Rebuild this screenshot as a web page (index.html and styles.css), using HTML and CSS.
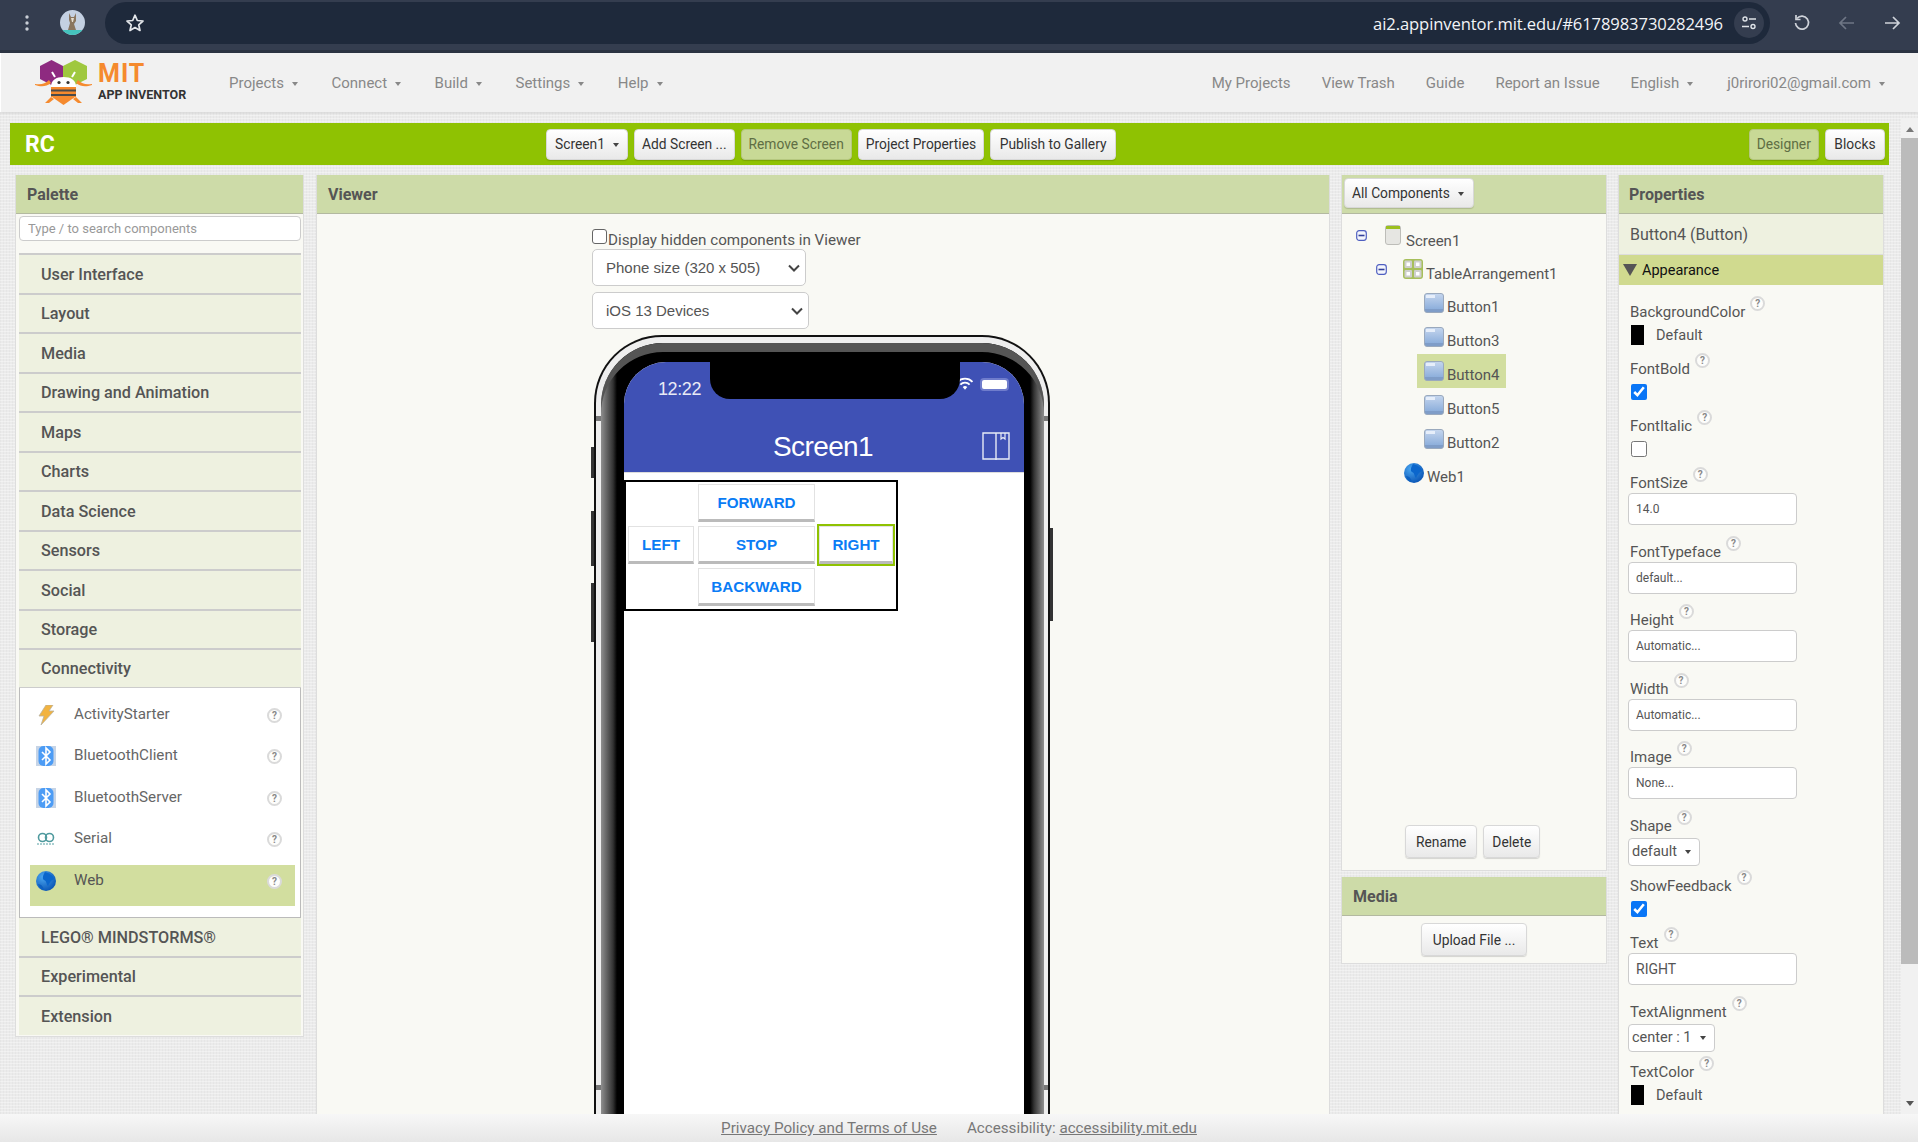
FILE: index.html
```html
<!DOCTYPE html>
<html lang="en">
<head>
    <meta charset="UTF-8">
    <title>MIT App Inventor</title>
    <link rel="stylesheet" href="styles.css">
</head>
<body>
    <svg class="defs" width="0" height="0">
        <defs>
            <radialGradient id="globe-fill" cx="35%" cy="30%" r="75%">
                <stop offset="0" stop-color="#4aa6f0"/>
                <stop offset="1" stop-color="#0a55b5"/>
            </radialGradient>
            <linearGradient id="btn-fill" x1="0" y1="0" x2="0" y2="1">
                <stop offset="0" stop-color="#c5d6ee"/>
                <stop offset="0.8" stop-color="#8fb0dc"/>
                <stop offset="0.8" stop-color="#7f9dc8"/>
                <stop offset="1" stop-color="#7f9dc8"/>
            </linearGradient>
            <symbol id="i-globe" viewBox="0 0 20 20">
                <circle cx="10" cy="10" r="10" fill="url(#globe-fill)"/>
                <path d="M9 1 C13 2 17 4 18 8 C15 9 14 11 12 15 C10 13 11 10 8 9 C6 8 7 4 9 1 Z" fill="#0b66cc"/>
                <path d="M2 13 C5 13 7 15 8 19 C5 19 3 16 2 13 Z" fill="#0d60c0"/>
            </symbol>
            <symbol id="i-button" viewBox="0 0 20 20">
                <rect x="0.5" y="0.5" width="19" height="19" rx="2.5" fill="url(#btn-fill)" stroke="#9aa9bd"/>
                <rect x="2" y="2" width="9" height="3" fill="#e6eefa"/>
            </symbol>
            <symbol id="i-minus" viewBox="0 0 11 11">
                <rect x="0.7" y="0.7" width="9.6" height="9.6" rx="2.5" fill="#f4f6fc" stroke="#4f5fc0" stroke-width="1.2"/>
                <rect x="2.5" y="4.7" width="6" height="1.6" fill="#33409a"/>
            </symbol>
            <symbol id="i-bluetooth" viewBox="0 0 20 20">
                <rect width="20" height="20" fill="#c6d4e6"/>
                <rect x="2.5" y="0" width="15" height="20" rx="5" fill="#4c9cf5"/>
                <path d="M6 6 L14 14 L10 18 V2 L14 6 L6 14" fill="none" stroke="#fff" stroke-width="1.6"/>
            </symbol>
            <symbol id="i-chevron" viewBox="0 0 12 8">
                <path d="M1 1.5 L6 6.5 L11 1.5" fill="none" stroke="#444" stroke-width="2"/>
            </symbol>
        </defs>
    </svg>

    <div class="browser-bar">
        <svg class="kebab" width="6" height="16" viewBox="0 0 6 16">
            <circle cx="3" cy="2" r="1.7" fill="#c9ced6"/>
            <circle cx="3" cy="8" r="1.7" fill="#c9ced6"/>
            <circle cx="3" cy="14" r="1.7" fill="#c9ced6"/>
        </svg>
        <svg class="avatar" width="25" height="25" viewBox="0 0 25 25">
            <clipPath id="avatar-clip"><circle cx="12.5" cy="12.5" r="12.5"/></clipPath>
            <g clip-path="url(#avatar-clip)">
                <rect width="25" height="25" fill="#c4d0e2"/>
                <rect y="20" width="25" height="5" fill="#45c3bd"/>
                <path d="M9 3 L11 7 H14 L16 3 L16 11 L14 14 L16 20 H8 L10 13 L9 10 Z" fill="#8a7660"/>
                <path d="M11 8 H14 L13 12 H12 Z" fill="#e8dfd0"/>
            </g>
        </svg>
        <div class="url-pill">
            <svg class="star" width="20" height="20" viewBox="0 0 20 20">
                <path d="M10 2.2 L12.3 7.5 L18 8 L13.7 11.8 L15 17.5 L10 14.5 L5 17.5 L6.3 11.8 L2 8 L7.7 7.5 Z" fill="none" stroke="#e3e6ea" stroke-width="1.7" stroke-linejoin="round"/>
            </svg>
            <span class="url-text">ai2.appinventor.mit.edu/#6178983730282496</span>
            <span class="tune-chip">
                <svg width="16" height="14" viewBox="0 0 16 14">
                    <circle cx="4" cy="3" r="2" fill="none" stroke="#dfe3e8" stroke-width="1.4"/>
                    <path d="M8 3 H15 M1 10.5 H8" stroke="#dfe3e8" stroke-width="1.4"/>
                    <circle cx="12" cy="10.5" r="2" fill="none" stroke="#dfe3e8" stroke-width="1.4"/>
                </svg>
            </span>
        </div>
        <svg class="tool-icon first" width="18" height="18" viewBox="0 0 18 18">
            <path d="M4 4.5 A6.5 6.5 0 1 1 2.5 9" fill="none" stroke="#cfd3da" stroke-width="1.7"/>
            <path d="M3 1 V5.5 H7.5" fill="none" stroke="#cfd3da" stroke-width="1.7"/>
        </svg>
        <svg class="tool-icon" width="18" height="18" viewBox="0 0 18 18">
            <path d="M16 9 H2 M8 3 L2 9 L8 15" fill="none" stroke="#6e7685" stroke-width="1.7"/>
        </svg>
        <svg class="tool-icon" width="18" height="18" viewBox="0 0 18 18">
            <path d="M2 9 H16 M10 3 L16 9 L10 15" fill="none" stroke="#cfd3da" stroke-width="1.7"/>
        </svg>
    </div>

    <header class="top-nav">
        <div class="brand">
            <svg class="brand-logo" width="57" height="48" viewBox="0 0 57 48">
                <path d="M16.5 1 L28 7 V20 L16.5 26 L5 20 V7 Z" fill="#8e2a80"/>
                <path d="M40 1 L52 7 V20 L40 26 L28 20 V7 Z" fill="#9fc83f"/>
                <path d="M0 25 C6 26 10 25 14 21 L16 24 C11 28 6 28 0 26 Z" fill="#f58a2e"/>
                <path d="M57 25 C51 26 47 25 43 21 L41 24 C46 28 51 28 57 26 Z" fill="#f58a2e"/>
                <path d="M16 28 C16 21 21 18 28.5 18 C36 18 41 21 41 28 Z" fill="#fff"/>
                <path d="M20 18 L17 13 M37 18 L40 13" stroke="#fff" stroke-width="2"/>
                <circle cx="24" cy="23.5" r="1.6" fill="#333"/>
                <circle cx="33" cy="23.5" r="1.6" fill="#333"/>
                <rect x="16" y="28" width="25" height="10" fill="#f58a2e"/>
                <rect x="16" y="30.5" width="25" height="2" fill="#4a4a4a"/>
                <rect x="16" y="35" width="25" height="2" fill="#4a4a4a"/>
                <path d="M17 38 H40 L28.5 46 Z" fill="#f58a2e"/>
                <path d="M16 38 L10 44 H14 L19 40 M41 38 L47 44 H43 L38 40" fill="#f58a2e"/>
            </svg>
            <div class="brand-text">
                <span class="brand-mit">MIT</span>
                <span class="brand-app">APP INVENTOR</span>
            </div>
        </div>
        <nav class="nav-left">
            <span class="nav-item">Projects<i class="caret"></i></span>
            <span class="nav-item">Connect<i class="caret"></i></span>
            <span class="nav-item">Build<i class="caret"></i></span>
            <span class="nav-item">Settings<i class="caret"></i></span>
            <span class="nav-item">Help<i class="caret"></i></span>
        </nav>
        <nav class="nav-right">
            <span class="nav-item">My Projects</span>
            <span class="nav-item">View Trash</span>
            <span class="nav-item">Guide</span>
            <span class="nav-item">Report an Issue</span>
            <span class="nav-item">English<i class="caret"></i></span>
            <span class="nav-item nav-user">j0rirori02@gmail.com<i class="caret"></i></span>
        </nav>
    </header>

    <div class="page-row">
        <main class="workspace">
            <div class="project-bar">
                <div class="project-title">RC</div>
                <div class="btn-group">
                    <button class="btn screen-btn">Screen1<i class="caret dark"></i></button>
                    <button class="btn">Add Screen ...</button>
                    <button class="btn is-muted">Remove Screen</button>
                    <button class="btn">Project Properties</button>
                    <button class="btn">Publish to Gallery</button>
                </div>
                <div class="btn-group view-switch">
                    <button class="btn is-muted">Designer</button>
                    <button class="btn">Blocks</button>
                </div>
            </div>

            <div class="columns">
                <section class="panel palette">
                    <h2 class="panel-head">Palette</h2>
                    <input class="palette-search" type="text" placeholder="Type / to search components">
                    <div class="drawer">User Interface</div>
                    <div class="drawer">Layout</div>
                    <div class="drawer">Media</div>
                    <div class="drawer">Drawing and Animation</div>
                    <div class="drawer">Maps</div>
                    <div class="drawer">Charts</div>
                    <div class="drawer">Data Science</div>
                    <div class="drawer">Sensors</div>
                    <div class="drawer">Social</div>
                    <div class="drawer">Storage</div>
                    <div class="drawer is-last">Connectivity</div>
                    <div class="drawer-open">
                        <div class="comp">
                            <svg class="comp-icon" viewBox="0 0 20 20">
                                <path d="M10 0 H17 L13 6 H18 L5 20 L8 11 H3 Z" fill="#f2b340" stroke="#b9b3a0" stroke-width="0.8"/>
                            </svg>
                            <span class="comp-name">ActivityStarter</span>
                            <span class="help">?</span>
                        </div>
                        <div class="comp">
                            <svg class="comp-icon"><use href="#i-bluetooth"/></svg>
                            <span class="comp-name">BluetoothClient</span>
                            <span class="help">?</span>
                        </div>
                        <div class="comp">
                            <svg class="comp-icon"><use href="#i-bluetooth"/></svg>
                            <span class="comp-name">BluetoothServer</span>
                            <span class="help">?</span>
                        </div>
                        <div class="comp">
                            <svg class="comp-icon" viewBox="0 0 20 20">
                                <circle cx="6.5" cy="8.5" r="4" fill="none" stroke="#4f9a9e" stroke-width="1.6"/>
                                <circle cx="13.5" cy="8.5" r="4" fill="none" stroke="#4f9a9e" stroke-width="1.6"/>
                                <path d="M1 15 H19" stroke="#8fc0c2" stroke-width="1.6" stroke-dasharray="2 1"/>
                            </svg>
                            <span class="comp-name">Serial</span>
                            <span class="help">?</span>
                        </div>
                        <div class="comp is-selected">
                            <svg class="comp-icon"><use href="#i-globe"/></svg>
                            <span class="comp-name">Web</span>
                            <span class="help">?</span>
                        </div>
                    </div>
                    <div class="drawer no-top">LEGO® MINDSTORMS®</div>
                    <div class="drawer">Experimental</div>
                    <div class="drawer">Extension</div>
                </section>

                <section class="panel viewer">
                    <h2 class="panel-head">Viewer</h2>
                    <div class="viewer-body">
                        <label class="hidden-toggle"><input type="checkbox">Display hidden components in Viewer</label>
                        <div class="select-wrap">
                            <select class="viewer-select size-select"><option>Phone size (320 x 505)</option></select>
                            <svg class="select-chevron"><use href="#i-chevron"/></svg>
                        </div>
                        <div class="select-wrap second">
                            <select class="viewer-select device-select"><option>iOS 13 Devices</option></select>
                            <svg class="select-chevron"><use href="#i-chevron"/></svg>
                        </div>

                        <div class="phone">
                            <i class="side-btn left-one"></i>
                            <i class="side-btn left-two"></i>
                            <i class="side-btn left-three"></i>
                            <i class="side-btn right-one"></i>
                            <div class="phone-silver">
                                <div class="phone-dark">
                                    <div class="phone-screen">
                                        <div class="notch"></div>
                                        <div class="status-row">
                                            <span class="status-time">12:22</span>
                                            <svg class="status-wifi" width="18" height="15" viewBox="0 0 15 13">
                                                <path d="M1 5 A9 9 0 0 1 14 5 M3.5 7.5 A5.5 5.5 0 0 1 11.5 7.5" fill="none" stroke="#fff" stroke-width="1.6"/>
                                                <path d="M5.5 9.6 A3 3 0 0 1 9.5 9.6 L7.5 12 Z" fill="#fff"/>
                                            </svg>
                                            <span class="status-battery"></span>
                                        </div>
                                        <div class="app-bar">
                                            <span class="app-title">Screen1</span>
                                            <svg class="app-book" width="28" height="28" viewBox="0 0 28 28">
                                                <path d="M1 1 H27 V27 H1 Z M14 1 V28" fill="none" stroke="#e8ebf6" stroke-width="1.4"/>
                                                <path d="M19 1 V7 L21 5.5 L23 7 V1" fill="none" stroke="#e8ebf6" stroke-width="1.2"/>
                                            </svg>
                                        </div>
                                        <div class="table-arr">
                                            <div class="table-cell cell-empty"></div>
                                            <div class="table-cell"><span class="app-btn">FORWARD</span></div>
                                            <div class="table-cell cell-empty"></div>
                                            <div class="table-cell"><span class="app-btn">LEFT</span></div>
                                            <div class="table-cell"><span class="app-btn">STOP</span></div>
                                            <div class="table-cell is-picked"><span class="app-btn">RIGHT</span></div>
                                            <div class="table-cell cell-empty"></div>
                                            <div class="table-cell"><span class="app-btn">BACKWARD</span></div>
                                            <div class="table-cell cell-empty"></div>
                                        </div>
                                    </div>
                                </div>
                            </div>
                        </div>
                    </div>
                </section>

                <div class="tree-column">
                    <section class="panel tree-panel">
                        <div class="panel-head tree-head">
                            <button class="btn all-btn">All Components<i class="caret dark"></i></button>
                        </div>
                        <div class="tree">
                            <div class="tree-row row-screen">
                                <svg class="tree-minus"><use href="#i-minus"/></svg>
                                <svg class="screen-icon" width="16" height="20" viewBox="0 0 16 20">
                                    <rect x="0.5" y="0.5" width="15" height="19" rx="2.5" fill="#e6e6e2" stroke="#bdbdb8"/>
                                    <rect x="1" y="1" width="14" height="3" fill="#9cc01e"/>
                                </svg>
                                <span>Screen1</span>
                            </div>
                            <div class="tree-row row-table">
                                <svg class="tree-minus"><use href="#i-minus"/></svg>
                                <svg class="tree-icon" viewBox="0 0 20 20">
                                    <rect width="20" height="20" rx="3" fill="#a7bf5b"/>
                                    <rect x="1.5" y="1.5" width="7.5" height="7.5" rx="1" fill="#cfcfcf"/>
                                    <rect x="11" y="1.5" width="7.5" height="7.5" rx="1" fill="#cfcfcf"/>
                                    <rect x="1.5" y="11" width="7.5" height="7.5" rx="1" fill="#cfcfcf"/>
                                    <rect x="11" y="11" width="7.5" height="7.5" rx="1" fill="#cfcfcf"/>
                                    <rect x="3.5" y="3.5" width="3.5" height="3.5" fill="#fff"/>
                                    <rect x="13" y="3.5" width="3.5" height="3.5" fill="#fff"/>
                                    <rect x="3.5" y="13" width="3.5" height="3.5" fill="#fff"/>
                                    <rect x="13" y="13" width="3.5" height="3.5" fill="#fff"/>
                                </svg>
                                <span>TableArrangement1</span>
                            </div>
                            <div class="tree-row row-child"><svg class="tree-icon"><use href="#i-button"/></svg><span>Button1</span></div>
                            <div class="tree-row row-child"><svg class="tree-icon"><use href="#i-button"/></svg><span>Button3</span></div>
                            <div class="tree-row row-child is-selected"><svg class="tree-icon"><use href="#i-button"/></svg><span>Button4</span></div>
                            <div class="tree-row row-child"><svg class="tree-icon"><use href="#i-button"/></svg><span>Button5</span></div>
                            <div class="tree-row row-child"><svg class="tree-icon"><use href="#i-button"/></svg><span>Button2</span></div>
                            <div class="tree-row row-web"><svg class="tree-icon"><use href="#i-globe"/></svg><span>Web1</span></div>
                        </div>
                        <div class="tree-actions">
                            <button class="btn">Rename</button>
                            <button class="btn">Delete</button>
                        </div>
                    </section>
                    <section class="panel media-panel">
                        <h2 class="panel-head">Media</h2>
                        <div class="media-body">
                            <button class="btn">Upload File ...</button>
                        </div>
                    </section>
                </div>

                <section class="panel properties">
                    <h2 class="panel-head">Properties</h2>
                    <div class="prop-title">Button4 (Button)</div>
                    <div class="prop-group"><i class="group-arrow"></i>Appearance</div>
                    <div class="prop-list">
                        <div class="prop prop-color">
                            <div class="prop-label">BackgroundColor<span class="help">?</span></div>
                            <div class="color-row"><i class="swatch"></i>Default</div>
                        </div>
                        <div class="prop prop-check">
                            <div class="prop-label">FontBold<span class="help">?</span></div>
                            <input class="prop-checkbox" type="checkbox" checked>
                        </div>
                        <div class="prop prop-check">
                            <div class="prop-label">FontItalic<span class="help">?</span></div>
                            <input class="prop-checkbox" type="checkbox">
                        </div>
                        <div class="prop prop-field">
                            <div class="prop-label">FontSize<span class="help">?</span></div>
                            <div class="prop-input">14.0</div>
                        </div>
                        <div class="prop prop-field">
                            <div class="prop-label">FontTypeface<span class="help">?</span></div>
                            <div class="prop-input">default...</div>
                        </div>
                        <div class="prop prop-field">
                            <div class="prop-label">Height<span class="help">?</span></div>
                            <div class="prop-input">Automatic...</div>
                        </div>
                        <div class="prop prop-field">
                            <div class="prop-label">Width<span class="help">?</span></div>
                            <div class="prop-input">Automatic...</div>
                        </div>
                        <div class="prop prop-field">
                            <div class="prop-label">Image<span class="help">?</span></div>
                            <div class="prop-input">None...</div>
                        </div>
                        <div class="prop prop-choice">
                            <div class="prop-label">Shape<span class="help">?</span></div>
                            <div class="prop-select">default<i class="caret dark"></i></div>
                        </div>
                        <div class="prop prop-check">
                            <div class="prop-label">ShowFeedback<span class="help">?</span></div>
                            <input class="prop-checkbox" type="checkbox" checked>
                        </div>
                        <div class="prop prop-field">
                            <div class="prop-label">Text<span class="help">?</span></div>
                            <div class="prop-input is-text">RIGHT</div>
                        </div>
                        <div class="prop prop-choice">
                            <div class="prop-label">TextAlignment<span class="help">?</span></div>
                            <div class="prop-select">center : 1<i class="caret dark"></i></div>
                        </div>
                        <div class="prop prop-color">
                            <div class="prop-label">TextColor<span class="help">?</span></div>
                            <div class="color-row"><i class="swatch"></i>Default</div>
                        </div>
                    </div>
                </section>
            </div>
        </main>
        <div class="scrollbar">
            <i class="scroll-up"></i>
            <div class="scroll-thumb"></div>
            <i class="scroll-down"></i>
        </div>
    </div>

    <footer class="page-footer">
        <a href="#">Privacy Policy and Terms of Use</a>
        <span>Accessibility: <a href="#">accessibility.mit.edu</a></span>
    </footer>
</body>
</html>
```

FILE: styles.css
```css
* {
    box-sizing: border-box;
}
html,
body {
    height: 100%;
}
body {
    margin: 0;
    height: 1142px;
    overflow: hidden;
    display: flex;
    flex-direction: column;
    font-family: Roboto, "Liberation Sans", sans-serif;
    color: #555;
    background-color: #ebebeb;
    background-image:
        repeating-linear-gradient(0deg, rgba(255, 255, 255, 0.35) 0 1px, transparent 1px 3px),
        repeating-linear-gradient(90deg, rgba(0, 0, 0, 0.025) 0 1px, transparent 1px 3px);
}
.defs {
    position: absolute;
}
button {
    font-family: inherit;
}

/* browser toolbar */
.browser-bar {
    height: 53px;
    flex: none;
    display: flex;
    align-items: flex-start;
    background: #343d4f;
    border-bottom: 3px solid #2b3342;
}
.kebab {
    margin: 15px 0 0 24px;
}
.avatar {
    margin: 10px 0 0 30px;
}
.url-pill {
    width: 1665px;
    height: 42px;
    margin: 2px 0 0 20px;
    padding: 0 6px 0 20px;
    display: flex;
    align-items: center;
    background: #1e293b;
    border-radius: 21px;
}
.url-text {
    margin-left: auto;
    color: #f2f4f7;
    font-family: "Open Sans", sans-serif;
    font-size: 16.6px;
    letter-spacing: -0.1px;
}
.tune-chip {
    width: 30px;
    height: 30px;
    margin-left: 11px;
    display: flex;
    align-items: center;
    justify-content: center;
    background: #343d4f;
    border-radius: 50%;
}
.tool-icon {
    margin: 14px 0 0 27px;
}
.tool-icon.first {
    margin-left: 23px;
}

/* app header */
.top-nav {
    height: 59px;
    flex: none;
    display: flex;
    align-items: center;
    padding-right: 33px;
    background: #f1f1f1;
    border-left: 1px solid #fff;
    box-shadow: 0 1px 2px rgba(0, 0, 0, 0.12);
}
.brand {
    width: 228px;
    padding-left: 34px;
    display: flex;
    align-items: center;
}
.brand-text {
    margin-left: 6px;
    padding-bottom: 4px;
    display: flex;
    flex-direction: column;
}
.brand-mit {
    color: #f58a2e;
    font-size: 25px;
    font-weight: 700;
    letter-spacing: 1px;
    line-height: 29px;
}
.brand-app {
    color: #333;
    font-size: 12.5px;
    font-weight: 700;
    line-height: 14px;
}
.nav-left {
    display: flex;
    gap: 33.5px;
}
.nav-right {
    margin-left: auto;
    display: flex;
    gap: 31px;
}
.nav-item {
    padding-top: 1px;
    color: #888;
    font-size: 15px;
    white-space: nowrap;
}
.nav-user {
    margin-left: 3px;
}
.caret {
    display: inline-block;
    margin-left: 8px;
    vertical-align: middle;
    border-top: 4px solid #888;
    border-left: 3px solid transparent;
    border-right: 3px solid transparent;
}
.caret.dark {
    border-top-color: #444;
}

/* page body */
.page-row {
    flex: 1;
    min-height: 0;
    display: flex;
}
.workspace {
    width: 1901px;
    padding: 11px 12px 0 10px;
    overflow: hidden;
    display: flex;
    flex-direction: column;
}
.scrollbar {
    width: 17px;
    margin-top: 6px;
    display: flex;
    flex-direction: column;
    align-items: center;
    background: #f1f1f1;
}
.scroll-up {
    margin: 9px 0 6px;
    border-bottom: 5px solid #777;
    border-left: 4px solid transparent;
    border-right: 4px solid transparent;
}
.scroll-thumb {
    width: 17px;
    height: 826px;
    background: #bbb;
}
.scroll-down {
    margin-top: auto;
    margin-bottom: 8px;
    border-top: 5px solid #555;
    border-left: 4px solid transparent;
    border-right: 4px solid transparent;
}
.project-bar {
    height: 42px;
    flex: none;
    display: flex;
    align-items: center;
    padding-right: 4px;
    background: #8fc202;
}
.project-title {
    width: 536px;
    padding-left: 15px;
    color: #fff;
    font-size: 23px;
    font-weight: 700;
}
.btn-group {
    display: flex;
    gap: 6px;
}
.view-switch {
    margin-left: auto;
}
.btn {
    height: 31px;
    padding: 0 7px;
    color: #333;
    font-size: 13.8px;
    white-space: nowrap;
    background: linear-gradient(#fff, #e9e9e9);
    border: 1px solid #d8d8d8;
    border-radius: 4px;
    box-shadow: 0 1px 1px rgba(0, 0, 0, 0.15);
}
.btn.is-muted {
    color: #5f6e44;
    background: #c8d996;
    border-color: #b5c77f;
}
.btn-group .btn:last-child {
    padding: 0 8.5px;
}
.screen-btn {
    width: 82px;
}
.columns {
    flex: 1;
    min-height: 0;
    margin-top: 10px;
    padding-left: 5px;
    display: flex;
    align-items: flex-start;
    gap: 11px;
}

/* panels */
.panel {
    background: #f9f9f4;
    border: 1px solid #ddd;
    border-top: none;
}
.panel-head {
    height: 39px;
    margin: 0;
    padding: 0 11px;
    display: flex;
    align-items: center;
    color: #555;
    font-size: 16px;
    font-weight: 700;
    background: #cddba8;
    border-bottom: 1px solid #b3b9a0;
}

/* palette */
.palette {
    width: 289px;
    margin-right: 1px;
    height: 862px;
    padding-bottom: 4px;
}
.palette-search {
    display: block;
    width: 282px;
    height: 25px;
    margin: 2px 0 12px 3px;
    padding: 0 8px;
    font-family: inherit;
    font-size: 13px;
    background: #fff;
    border: 1px solid #ccc;
    border-radius: 4px;
}
.palette-search::placeholder {
    color: #999;
}
.drawer {
    height: 39.5px;
    margin: 0 2px 0 3px;
    padding: 1px 0 0 22px;
    display: flex;
    align-items: center;
    color: #555;
    font-size: 16.2px;
    font-weight: 500;
    background: #eef1e0;
    border-top: 2px solid #ccc;
}
.drawer.is-last {
    border-bottom: 1px solid #ccc;
}
.drawer.no-top {
    height: 38px;
    border-top: none;
}
.drawer-open {
    height: 230px;
    margin: 0 2px 0 3px;
    padding: 11px 5px 0 10px;
    background: #fff;
    border: 1px solid #bbb;
    border-top: none;
}
.comp {
    height: 41.5px;
    padding: 6px 13px 0 6px;
    display: flex;
    align-items: flex-start;
    color: #666;
    font-size: 15.2px;
}
.comp.is-selected {
    color: #555;
    background: #d2de9f;
}
.comp-icon {
    width: 20px;
    height: 20px;
    flex: none;
}
.comp-name {
    margin: -1px 0 0 18px;
    flex: 1;
    line-height: 20px;
}
.help {
    width: 15px;
    height: 15px;
    flex: none;
    display: inline-flex;
    align-items: center;
    justify-content: center;
    color: #888;
    font-size: 10px;
    font-weight: 700;
    background: #fdfdfb;
    border: 2px solid #dadada;
    border-radius: 50%;
}
.comp .help {
    margin-top: 3px;
}

/* viewer */
.viewer {
    width: 1014px;
    height: 1000px;
}
.viewer-body {
    padding: 16px 0 0 275px;
    display: flex;
    flex-direction: column;
    align-items: flex-start;
}
.hidden-toggle {
    height: 19px;
    display: flex;
    align-items: center;
    color: #555;
    font-size: 15.2px;
}
.hidden-toggle input {
    width: 15px;
    height: 15px;
    margin: -7px 1px 0 0;
    appearance: none;
    background: #fff;
    border: 1px solid #666;
    border-radius: 3px;
}
.select-wrap {
    position: relative;
    height: 37px;
}
.select-wrap.second {
    margin-top: 6px;
}
.select-chevron {
    position: absolute;
    right: 6px;
    top: 15px;
    width: 12px;
    height: 8px;
    pointer-events: none;
}
.viewer-select {
    display: block;
    height: 37px;
    padding: 0 13px;
    color: #555;
    font-family: "Liberation Sans", sans-serif;
    font-size: 15px;
    appearance: none;
    background: #fff;
    border: 1px solid #ccc;
    border-radius: 5px;
}
.size-select {
    width: 214px;
}
.device-select {
    width: 217px;
}

/* phone mock */
.phone {
    position: relative;
    width: 456px;
    height: 800px;
    margin: 6px 0 0 2px;
    padding: 2px;
    background: #111;
    border-radius: 68px 68px 0 0;
}
.phone-silver {
    height: 100%;
    padding: 6px 4px 0 5px;
    background:
        linear-gradient(#777, #777) 0 79px / 100% 5px no-repeat,
        linear-gradient(#777, #777) 0 748px / 100% 5px no-repeat,
        #eee;
    border-radius: 66px 66px 0 0;
}
.phone-dark {
    height: 100%;
    padding: 19px 20px 0 23px;
    background: linear-gradient(90deg, #8f8f8f 0, #333 12px, #000 16px, #000 calc(100% - 14px), #333 calc(100% - 10px), #8f8f8f 100%);
    border-radius: 62px 62px 0 0;
    box-shadow: inset 0 9px 0 #555;
}
.phone-screen {
    position: relative;
    height: 100%;
    background: #fff;
    border-radius: 42px 42px 0 0;
    overflow: hidden;
}
.side-btn {
    position: absolute;
    width: 3px;
    background: #333;
}
.left-one {
    left: -3px;
    top: 112px;
    height: 31px;
}
.left-two {
    left: -3px;
    top: 176px;
    height: 55px;
}
.left-three {
    left: -3px;
    top: 248px;
    height: 59px;
}
.right-one {
    right: -3px;
    top: 193px;
    height: 93px;
}
.notch {
    position: absolute;
    left: 86px;
    top: 0;
    width: 250px;
    height: 37px;
    background: #000;
    border-radius: 0 0 20px 20px;
}
.status-row {
    height: 50px;
    padding-top: 4px;
    display: flex;
    align-items: center;
    color: #e9ebf6;
    background: #3f51b5;
    font-family: "Liberation Sans", sans-serif;
}
.status-time {
    margin-left: 34px;
    font-size: 18px;
    letter-spacing: -0.4px;
}
.status-wifi {
    margin: -11px 0 0 255px;
}
.status-battery {
    width: 29px;
    height: 13px;
    margin: -9px 0 0 6px;
    background: #fff;
    border: 2px solid #6f7ccc;
    border-radius: 4px;
}
.app-bar {
    height: 61px;
    position: relative;
    padding-top: 10px;
    display: flex;
    align-items: center;
    justify-content: center;
    background: #3f51b5;
    border-bottom: 1px solid #ddd;
}
.app-title {
    margin-right: 2px;
    color: #fff;
    font-family: "Liberation Sans", sans-serif;
    font-size: 28px;
    letter-spacing: -0.6px;
}
.app-book {
    position: absolute;
    right: 14px;
    top: 20px;
}
.table-arr {
    width: 274px;
    height: 131px;
    margin-top: 7px;
    display: grid;
    grid-template-columns: 70px 121px 78px;
    grid-template-rows: 42px 42px 42px;
    background: #fff;
    border: 2px solid #000;
}
.table-cell {
    padding: 2px;
    display: flex;
}
.table-cell.is-picked {
    padding: 0;
    border: 2px solid #8fc202;
}
.app-btn {
    flex: 1;
    display: flex;
    align-items: center;
    justify-content: center;
    color: #0a7cf5;
    font-family: "Liberation Sans", sans-serif;
    font-size: 15.2px;
    font-weight: 700;
    background: #fff;
    border: 1px solid #e2e2e2;
    border-bottom: 3px solid #bbb;
}

/* component tree */
.tree-column {
    width: 266px;
    display: flex;
    flex-direction: column;
    gap: 6px;
}
.tree-panel {
    height: 696px;
    display: flex;
    flex-direction: column;
}
.tree-head {
    padding: 0 0 3px 2px;
}
.all-btn {
    width: 130px;
    height: 30px;
    padding: 0 0 0 7px;
    text-align: left;
}
.tree {
    flex: 1;
    padding-top: 4px;
    color: #555;
    font-size: 15px;
}
.tree-row {
    height: 34px;
    display: flex;
    align-items: center;
}
.tree-row span {
    margin-top: 7px;
}
.row-screen span {
    margin-top: 11px;
}
.row-table span {
    margin-top: 10px;
}
.tree-icon {
    width: 20px;
    height: 20px;
    flex: none;
}
.tree-minus {
    width: 11px;
    height: 11px;
    flex: none;
}
.row-screen {
    padding-left: 14px;
}
.screen-icon {
    margin: 0 5px 0 18px;
}
.row-table {
    padding-left: 34px;
}
.row-table .tree-icon {
    margin: 0 3px 0 16px;
}
.row-child {
    padding-left: 82px;
}
.row-child .tree-icon {
    margin-right: 3px;
}
.row-child.is-selected {
    width: 164px;
    background: linear-gradient(90deg, transparent 75px, #d2de9f 75px);
}
.row-web {
    padding-left: 62px;
}
.row-web .tree-icon {
    margin-right: 3px;
}
.tree-actions {
    height: 46px;
    padding: 1px 0 0 63px;
    display: flex;
    gap: 6px;
}
.tree-actions .btn {
    height: 33px;
    padding: 0 10px;
}
.tree-actions .btn:last-child {
    padding: 0 8px;
}
.media-panel {
    height: 87px;
}
.media-body {
    padding-top: 7px;
    display: flex;
    justify-content: center;
}
.media-body .btn {
    height: 33px;
    width: 106px;
}

/* properties */
.properties {
    width: 266px;
    height: 1000px;
}
.properties .panel-head {
    padding-left: 10px;
}
.prop-title {
    height: 41px;
    padding-left: 11px;
    display: flex;
    align-items: center;
    font-size: 16px;
    background: #eef1e0;
    border-bottom: 1px solid #ddd;
}
.prop-group {
    height: 30px;
    padding-left: 4px;
    display: flex;
    align-items: center;
    color: #111;
    font-size: 14.5px;
    background: #d0da8f;
}
.group-arrow {
    margin-right: 5px;
    border-top: 12px solid #555;
    border-left: 7px solid transparent;
    border-right: 7px solid transparent;
}
.prop-list {
    padding: 17px 0 0 9px;
}
.prop-label {
    height: 20px;
    padding-left: 2px;
    display: flex;
    align-items: center;
    font-size: 15px;
}
.prop-label .help {
    margin: -17px 0 0 5px;
}
.prop-color {
    margin-bottom: 14px;
}
.color-row {
    margin: 3px 0 0 3px;
    height: 20px;
    display: flex;
    align-items: center;
    font-size: 14.5px;
}
.swatch {
    width: 13px;
    height: 20px;
    margin-right: 12px;
    background: #000;
}
.prop-check {
    margin-bottom: 16px;
}
.prop-checkbox {
    display: block;
    width: 16px;
    height: 16px;
    margin: 5px 0 0 3px;
    accent-color: #0a76f6;
}
.prop-field {
    margin-bottom: 16.5px;
}
.prop-input {
    width: 169px;
    height: 32px;
    padding-left: 7px;
    display: flex;
    align-items: center;
    color: #555;
    font-size: 12px;
    background: #fff;
    border: 1px solid #ccc;
    border-radius: 4px;
}
.prop-input.is-text {
    margin-bottom: 1.5px;
    font-size: 14px;
}
.prop-choice {
    margin-bottom: 10.5px;
}
.prop-choice .prop-label {
    margin-bottom: 2px;
}
.prop-select {
    display: inline-flex;
    height: 28px;
    padding: 0 8px 0 3px;
    align-items: center;
    font-size: 14.5px;
    background: #fff;
    border: 1px solid #ccc;
    border-radius: 4px;
}

/* footer */
.page-footer {
    height: 28px;
    flex: none;
    position: relative;
    display: flex;
    align-items: center;
    justify-content: center;
    gap: 30px;
    color: #777;
    font-size: 15.2px;
    background: linear-gradient(#f7f7f7, #e7e7e7);
}
.page-footer a {
    color: #777;
}
```
